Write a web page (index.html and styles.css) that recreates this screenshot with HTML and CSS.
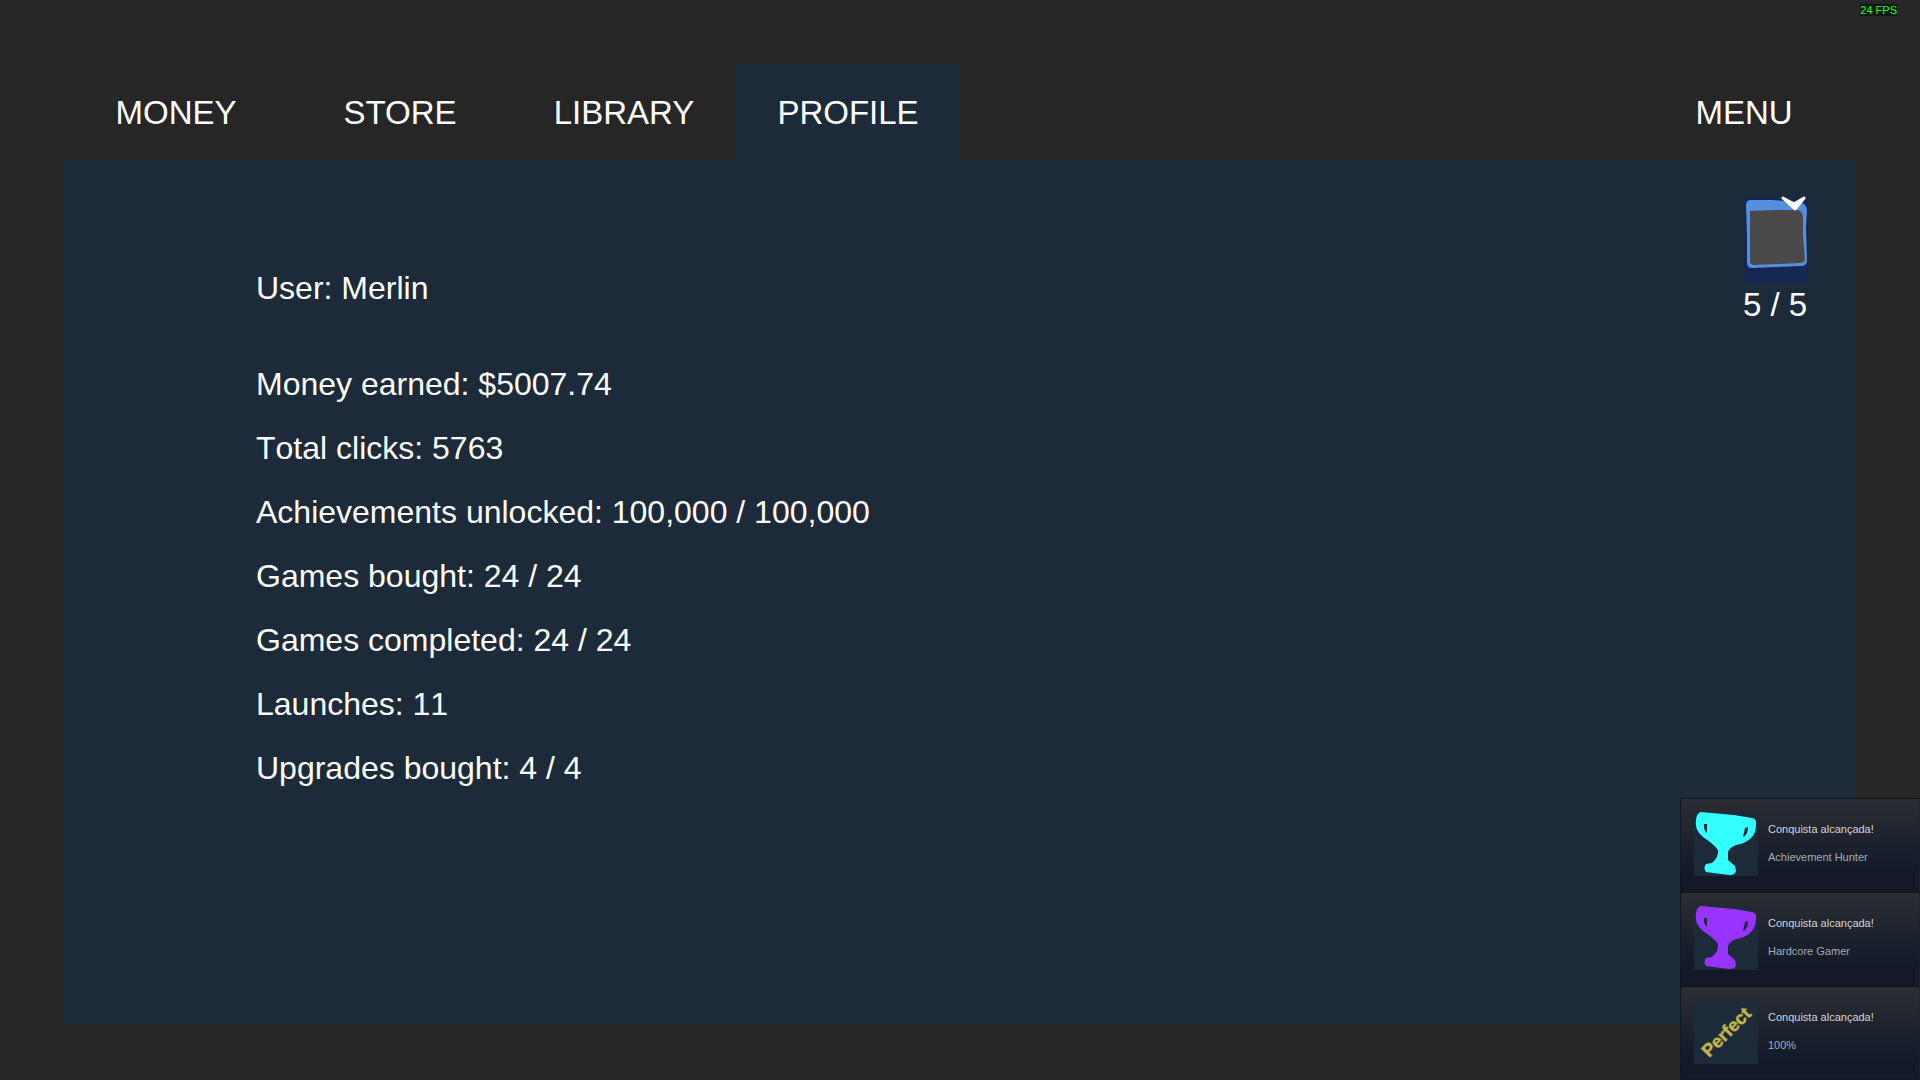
FILE: index.html
```
<!DOCTYPE html>
<html lang="en">
<head>
  <meta charset="UTF-8" />
  <meta name="viewport" content="width=device-width, initial-scale=1.0"/>
  <title>Profile</title>
  <link rel="stylesheet" href="styles.css">
</head>
<body>
    <div class="fps">24 FPS</div>

    <nav class="tabs">
        <button class="tab">MONEY</button>
        <button class="tab">STORE</button>
        <button class="tab">LIBRARY</button>
        <button class="tab active">PROFILE</button>
        <button class="tab menu">MENU</button>
    </nav>

    <main class="panel">
        <div class="stats">
            <p class="user">User: Merlin</p>
            <p>Money earned: $5007.74</p>
            <p>Total clicks: 5763</p>
            <p>Achievements unlocked: 100,000 / 100,000</p>
            <p>Games bought: 24 / 24</p>
            <p>Games completed: 24 / 24</p>
            <p>Launches: 11</p>
            <p>Upgrades bought: 4 / 4</p>
        </div>

        <div class="cards">
            <svg class="card-icon" viewBox="0 0 66 88" aria-hidden="true">
                <defs>
                    <filter id="soft" x="-10%" y="-10%" width="120%" height="120%">
                        <feGaussianBlur stdDeviation="1"/>
                    </filter>
                </defs>
                <rect x="2" y="2" width="64" height="85" fill="#172554" filter="url(#soft)"/>
                <path d="M4 9Q4 4 9 4L30 4L58 6Q65 8 65 15L64 30L65 64Q65 70 59 70L34 71L10 72Q5 72 5 66L5 40Z" fill="#5590e0"/>
                <path d="M8 15L34 14L56 14Q61 16 61 22L61 40L63 64Q62 67 58 67L36 68L11 69L8 67L8 40Z" fill="#4a4848"/>
                <path d="M41 2L53 13L62 2L52 8Z" fill="#fff" stroke="#fff" stroke-width="3" stroke-linejoin="round"/>
            </svg>
            <span class="card-count">5 / 5</span>
        </div>
    </main>

    <!-- Achievement popups -->
    <aside class="toasts" lang="pt">
        <div class="toast">
            <svg class="toast-icon cyan" viewBox="0 0 64 64" aria-hidden="true">
                <path class="cup" d="M7 0L40 3L58 6Q63 7 62 13Q62 22 56 27Q50 32 42 33Q35 36 34 40L34 48L41 54L42 59Q41 63 36 63L27 62L12 60Q9 56 12 52L18 51Q25 45 24 38Q21 33 9 25Q0 18 2 7Q3 1 7 0Z"/>
                <path class="hole" d="M10 12L13 12L13 21Q9 17 10 12ZM54 15Q54 21 51 24L49 25L51 16Z"/>
            </svg>
            <div class="toast-text">
                <h2>Conquista alcançada!</h2>
                <p>Achievement Hunter</p>
            </div>
        </div>
        <div class="toast">
            <svg class="toast-icon purple" viewBox="0 0 64 64" aria-hidden="true">
                <path class="cup" d="M7 0L40 3L58 6Q63 7 62 13Q62 22 56 27Q50 32 42 33Q35 36 34 40L34 48L41 54L42 59Q41 63 36 63L27 62L12 60Q9 56 12 52L18 51Q25 45 24 38Q21 33 9 25Q0 18 2 7Q3 1 7 0Z"/>
                <path class="hole" d="M10 12L13 12L13 21Q9 17 10 12ZM54 15Q54 21 51 24L49 25L51 16Z"/>
            </svg>
            <div class="toast-text">
                <h2>Conquista alcançada!</h2>
                <p>Hardcore Gamer</p>
            </div>
        </div>
        <div class="toast">
            <svg class="toast-icon" viewBox="0 0 64 64">
                <text class="perfect" transform="translate(15 58) rotate(-45)">Perfect</text>
            </svg>
            <div class="toast-text">
                <h2>Conquista alcançada!</h2>
                <p>100%</p>
            </div>
        </div>
    </aside>
</body>
</html>
```
FILE: styles.css
```
* {
    margin: 0;
    padding: 0;
    box-sizing: border-box;
}

body {
    background-color: #262626;
    color: white;
    min-height: 100vh;
    padding: 64px 64px 56px;
    display: flex;
    flex-direction: column;
    font-family: "Liberation Sans", Arial, sans-serif;
    font-size: 33px;
}

.fps {
    position: fixed;
    top: 4px;
    right: 23px;
    background-color: #101810;
    color: #22ff22;
    font-size: 11px;
    line-height: 12px;
}

/* Tabs */
.tabs {
    display: flex;
}

.tab {
    flex: 0 0 12.5%;
    background: none;
    border: none;
    color: white;
    font: inherit;
    line-height: 94px;
    padding-top: 2px;
    cursor: pointer;
}

.tab.active {
    background-color: #1c2a39;
}

.tab.menu {
    margin-left: auto;
}

.panel {
    flex: 1;
    display: flex;
    justify-content: space-between;
    align-items: flex-start;
    background-color: #1c2a39;
    padding: 36px 48px 48px 192px;
}

.stats {
    padding-top: 60px;
    font-size: 32px;
    font-kerning: none;
    line-height: 64px;
}

.user {
    margin-bottom: 32px;
}

.cards {
    display: flex;
    flex-direction: column;
    align-items: center;
}

.card-icon {
    width: 66px;
    height: 88px;
}

.card-count {
    line-height: 42px;
}

/* Popups */
.toasts {
    position: fixed;
    right: 0;
    bottom: 0;
    width: 240px;
}

.toast {
    display: flex;
    gap: 10px;
    height: 94px;
    padding: 13px;
    border: 1px solid #101722;
    border-right-color: #14243c;
    background: linear-gradient(#2b2d31, #121a2a 80%);
}

.toast-icon {
    width: 64px;
    height: 64px;
    background-color: #1c2a39;
}

.cyan .cup {
    fill: #33ffff;
}

.purple .cup {
    fill: #9933ff;
}

.hole {
    fill: #1c2a39;
}

.perfect {
    fill: #c4b84a;
    stroke: #6f6d3f;
    stroke-width: 1px;
    paint-order: stroke;
    font-size: 18px;
    font-weight: bold;
}

.toast-text {
    padding-top: 8px;
    font-size: 11px;
    line-height: 18px;
    white-space: nowrap;
}

.toast-text h2 {
    color: #d2d5da;
    font-size: 11px;
    font-weight: normal;
    margin-bottom: 10px;
}

.toast-text p {
    color: #a8acb4;
}
```
